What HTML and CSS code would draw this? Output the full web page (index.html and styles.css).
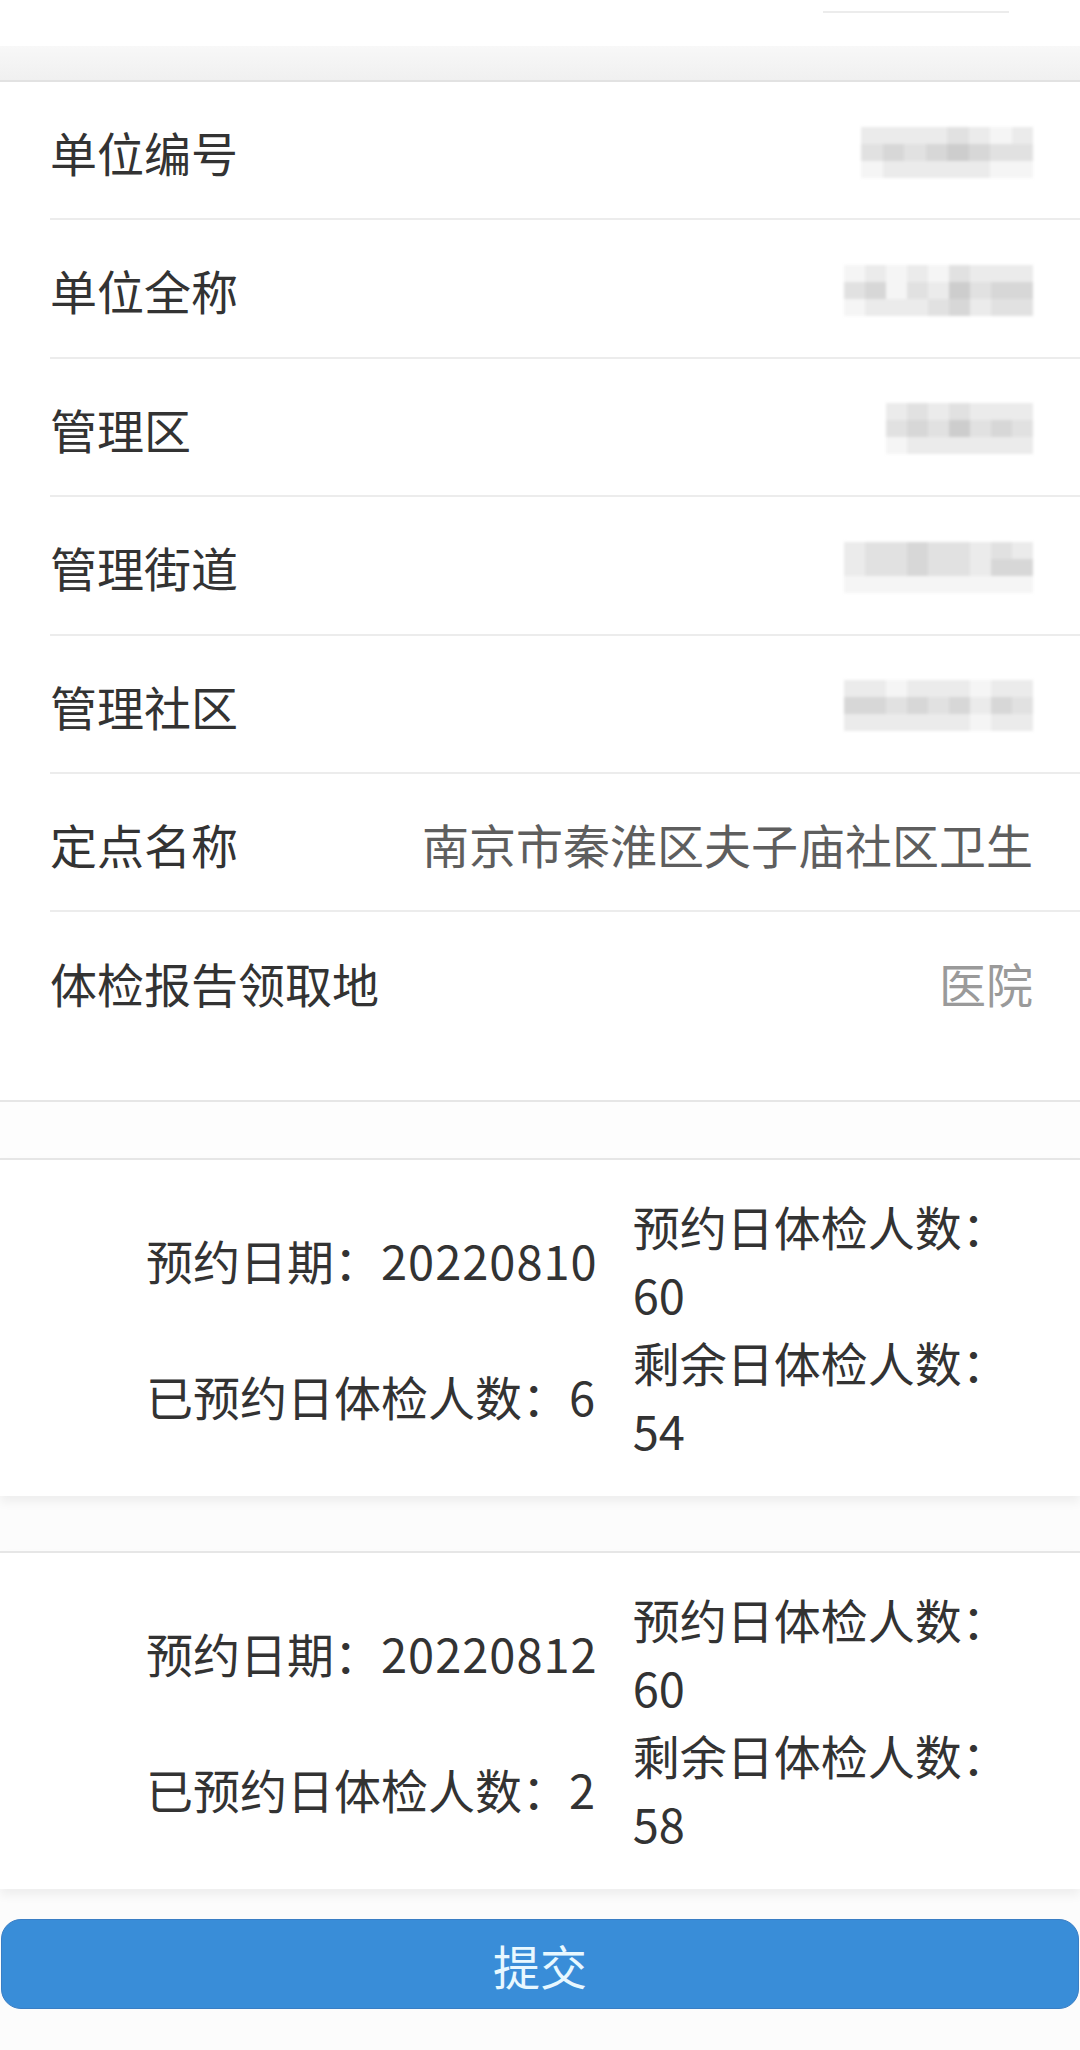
FILE: index.html
```html
<!DOCTYPE html>
<html lang="zh-CN">
<head>
<meta charset="utf-8">
<title>体检预约</title>
<link rel="stylesheet" href="styles.css">
</head>
<body>
<div class="page">
  <div class="topstrip"><span class="ghost"></span></div>
  <div class="band"></div>

  <div class="list">
    <div class="row">
      <span class="label">单位编号</span>
      <span class="mosaic w8">
        <i class="m1"></i><i class="m1"></i><i class="m1"></i><i class="m1"></i><i class="m2"></i><i class="m1"></i><i class="m0"></i><i class="m1"></i>
        <i class="m2"></i><i class="m3"></i><i class="m2"></i><i class="m3"></i><i class="m4"></i><i class="m3"></i><i class="m2"></i><i class="m2"></i>
        <i class="m0"></i><i class="m1"></i><i class="m1"></i><i class="m1"></i><i class="m1"></i><i class="m1"></i><i class="m0"></i><i class="m0"></i>
      </span>
    </div>
    <div class="row">
      <span class="label">单位全称</span>
      <span class="mosaic w9">
        <i class="m0"></i><i class="m1"></i><i class="m0"></i><i class="m1"></i><i class="m0"></i><i class="m2"></i><i class="m1"></i><i class="m1"></i><i class="m1"></i>
        <i class="m2"></i><i class="m3"></i><i class="m0"></i><i class="m2"></i><i class="m1"></i><i class="m4"></i><i class="m2"></i><i class="m3"></i><i class="m3"></i>
        <i class="m0"></i><i class="m1"></i><i class="m1"></i><i class="m1"></i><i class="m2"></i><i class="m3"></i><i class="m1"></i><i class="m2"></i><i class="m2"></i>
      </span>
    </div>
    <div class="row">
      <span class="label">管理区</span>
      <span class="mosaic w7">
        <i class="m1"></i><i class="m2"></i><i class="m1"></i><i class="m2"></i><i class="m1"></i><i class="m1"></i><i class="m1"></i>
        <i class="m2"></i><i class="m3"></i><i class="m2"></i><i class="m4"></i><i class="m2"></i><i class="m3"></i><i class="m2"></i>
        <i class="m0"></i><i class="m1"></i><i class="m1"></i><i class="m1"></i><i class="m1"></i><i class="m1"></i><i class="m1"></i>
      </span>
    </div>
    <div class="row">
      <span class="label">管理街道</span>
      <span class="mosaic w9">
        <i class="m1"></i><i class="m2"></i><i class="m2"></i><i class="m3"></i><i class="m2"></i><i class="m2"></i><i class="m1"></i><i class="m2"></i><i class="m1"></i>
        <i class="m1"></i><i class="m2"></i><i class="m2"></i><i class="m3"></i><i class="m2"></i><i class="m2"></i><i class="m1"></i><i class="m3"></i><i class="m3"></i>
        <i class="m0"></i><i class="m0"></i><i class="m0"></i><i class="m0"></i><i class="m0"></i><i class="m0"></i><i class="m0"></i><i class="m0"></i><i class="m0"></i>
      </span>
    </div>
    <div class="row">
      <span class="label">管理社区</span>
      <span class="mosaic w9">
        <i class="m1"></i><i class="m1"></i><i class="m0"></i><i class="m1"></i><i class="m1"></i><i class="m1"></i><i class="m0"></i><i class="m1"></i><i class="m1"></i>
        <i class="m3"></i><i class="m3"></i><i class="m2"></i><i class="m3"></i><i class="m2"></i><i class="m3"></i><i class="m1"></i><i class="m3"></i><i class="m2"></i>
        <i class="m1"></i><i class="m1"></i><i class="m1"></i><i class="m1"></i><i class="m1"></i><i class="m1"></i><i class="m0"></i><i class="m1"></i><i class="m1"></i>
      </span>
    </div>
    <div class="row">
      <span class="label">定点名称</span>
      <span class="value">南京市秦淮区夫子庙社区卫生</span>
    </div>
    <div class="row last">
      <span class="label">体检报告领取地</span>
      <span class="value light">医院</span>
    </div>
  </div>

  <div class="gap"></div>

  <div class="slot">
    <div class="cell left">预约日期：<span class="num">20220810</span></div>
    <div class="cell right">预约日体检人数：60</div>
    <div class="cell left">已预约日体检人数：<span class="num">6</span></div>
    <div class="cell right">剩余日体检人数：54</div>
  </div>

  <div class="gap2"></div>

  <div class="slot">
    <div class="cell left">预约日期：<span class="num">20220812</span></div>
    <div class="cell right">预约日体检人数：60</div>
    <div class="cell left">已预约日体检人数：<span class="num">2</span></div>
    <div class="cell right">剩余日体检人数：58</div>
  </div>

  <div class="actions">
    <button class="submit" type="button">提交</button>
  </div>
</div>
</body>
</html>
```

FILE: styles.css
```css
* { box-sizing: border-box; }
html, body { margin: 0; padding: 0; }
body {
  background: #fcfcfc;
  font-family: "Noto Sans CJK SC", "Noto Sans", sans-serif;
  color: #333;
}
.page { width: 1080px; min-height: 2050px; background: #fcfcfc; }

.topstrip {
  height: 46px;
  background: #fff;
  position: relative;
}
.ghost {
  position: absolute;
  left: 823px;
  top: 11px;
  width: 186px;
  height: 2px;
  background: #ececec;
}
.band {
  height: 36px;
  background: linear-gradient(#f8f8f8, #f0f0f0);
  border-bottom: 2px solid #e2e2e2;
}

.list {
  background: #fff;
  border-bottom: 2px solid #e6e6e6;
  padding-bottom: 51px;
}
.row {
  display: flex;
  align-items: center;
  justify-content: space-between;
  height: 138.4px;
  margin-left: 50px;
  padding-right: 47px;
  border-bottom: 2px solid #ececec;
}
.row.last { border-bottom: none; height: 137px; }
.label {
  font-size: 47px;
  color: #333;
  white-space: nowrap;
  line-height: 1.2;
  padding-top: 4px;
}
.value {
  font-size: 47px;
  color: #5e5e5e;
  white-space: nowrap;
  line-height: 1.2;
  padding-top: 4px;
}
.value.light { color: #9a9a9a; }

.mosaic {
  display: grid;
  grid-auto-rows: 17px;
  filter: blur(1.5px);
  margin-top: 4px;
}
.mosaic.w7 { grid-template-columns: repeat(7, 21px); }
.mosaic.w8 { grid-template-columns: repeat(8, 21.5px); }
.mosaic.w9 { grid-template-columns: repeat(9, 21px); }
.mosaic i { display: block; }
.m0 { background: #f5f5f5; }
.m1 { background: #ebebeb; }
.m2 { background: #e1e1e1; }
.m3 { background: #d7d7d7; }
.m4 { background: #cdcdcd; }

.gap { height: 56px; background: #fdfdfd; }
.gap2 { height: 55px; }

.slot {
  display: grid;
  grid-template-columns: auto 1fr;
  column-gap: 35px;
  padding: 32px 36px 32px 146px;
  background: #fff;
  border-top: 2px solid #e6e6e6;
  box-shadow: 0 6px 10px rgba(0, 0, 0, 0.06);
  font-size: 47px;
  line-height: 68px;
  color: #333;
}
.num { letter-spacing: 1px; }
.cell.left { align-self: center; white-space: nowrap; }

.actions { padding: 30px 1px 0 1px; }
.submit {
  display: block;
  width: 100%;
  height: 90px;
  border: 1px solid #3a7ec4;
  border-radius: 20px;
  background: #398dd8;
  color: #e8f8ff;
  font-family: "Noto Sans CJK SC", sans-serif;
  font-size: 47px;
  line-height: 1;
  padding: 0;
}
```
